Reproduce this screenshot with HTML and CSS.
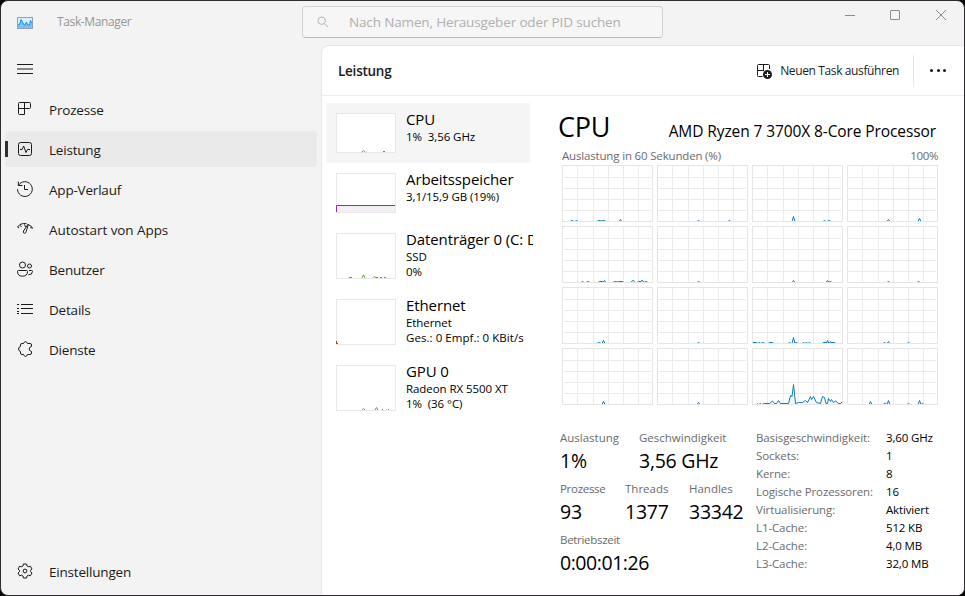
FILE: index.html
```html
<!DOCTYPE html>
<html lang="de">
<head>
    <meta charset="UTF-8">
    <meta name="viewport" content="width=device-width, initial-scale=1.0">
    <title>Task-Manager</title>
    <link rel="stylesheet" href="styles.css">
</head>
<body>
    <div class="window">
        <header class="titlebar">
            <div class="app">
                <svg class="app-icon" width="16" height="12" viewBox="0 0 16 12">
                    <rect x="0.5" y="0.5" width="15" height="11" fill="#d9effc" stroke="#8fa3b3"/>
                    <path d="M1 11V8L2.5 7.5L4 2.5L6 6L7.5 8.5L9.5 5L10.5 8L12.5 8L13.5 3.5L15 6V11Z" fill="#72c4fb"/>
                    <path d="M1 8L2.5 7.5L4 2.5L6 6L7.5 8.5L9.5 5L10.5 8L12.5 8L13.5 3.5L15 6" fill="none" stroke="#1c8de0"/>
                </svg>
                <span class="app-name">Task-Manager</span>
            </div>
            <div class="search">
                <svg width="12" height="12" viewBox="0 0 12 12" fill="none" stroke="#b4b4b4">
                    <circle cx="4.7" cy="4.7" r="3.7"/>
                    <path d="M7.5 7.5L11 11"/>
                </svg>
                <span class="search-text">Nach Namen, Herausgeber oder PID suchen</span>
            </div>
            <div class="controls">
                <svg width="12" height="12" viewBox="0 0 12 12"><path d="M0 6.5H10"/></svg>
                <svg width="12" height="12" viewBox="0 0 12 12"><rect x="0.5" y="1.5" width="9" height="9" rx="0.5"/></svg>
                <svg width="12" height="12" viewBox="0 0 12 12"><path d="M1 1L11 11M11 1L1 11"/></svg>
            </div>
        </header>

        <div class="body">
            <nav class="sidebar">
                <div class="burger">
                    <svg width="16" height="11" viewBox="0 0 16 11"><path d="M0 0.5H16M0 5H16M0 9.5H16"/></svg>
                </div>
                <ul class="menu">
                    <li>
                        <svg width="16" height="16" viewBox="0 0 16 16"><path d="M2.5 1.5H12.5Q13.5 1.5 13.5 2.5V6.5Q13.5 7.5 12.5 7.5H1.5M7.5 1.5V13.5H2.5Q1.5 13.5 1.5 12.5V2.5Q1.5 1.5 2.5 1.5"/></svg>
                        <span>Prozesse</span>
                    </li>
                    <li class="active">
                        <svg width="16" height="16" viewBox="0 0 16 16"><rect x="1.5" y="1.5" width="13" height="13" rx="2"/><path d="M3 8.5H5L6.7 5L9 11.5L10.5 8.5H13"/></svg>
                        <span>Leistung</span>
                    </li>
                    <li>
                        <svg width="16" height="16" viewBox="0 0 16 16"><path d="M1.3 0.5V4.5H5.5M1.6 4.2A7.4 7.4 0 1 1 0.5 8.2M7.5 4V8.5H11"/></svg>
                        <span>App-Verlauf</span>
                    </li>
                    <li>
                        <svg width="16" height="16" viewBox="0 0 16 16"><path d="M0.5 6Q2.5 2.6 6.5 2.5L9.5 2.7M3 4.2L4.5 6M0.5 6L2.2 7M12 4Q14.5 4.8 15.6 7.2L13.3 6.6M11.3 3L6.5 10Q6 12.3 7.5 12.3Q9 12.3 9.2 10.5L11.5 3M7.5 3.5L8.5 6"/></svg>
                        <span class="autostart">Autostart von Apps</span>
                    </li>
                    <li>
                        <svg width="16" height="16" viewBox="0 0 16 16"><circle cx="5.5" cy="4" r="3"/><circle cx="12.5" cy="5" r="2"/><path d="M1.5 9.5H9.5Q10.5 9.5 10.5 10.5Q10.5 15.2 5.5 15.2Q0.5 15.2 0.5 10.5Q0.5 9.5 1.5 9.5M12 9.5H14.5Q15.5 9.5 15.5 10.5Q15.2 14 11.5 13.8"/></svg>
                        <span>Benutzer</span>
                    </li>
                    <li>
                        <svg width="16" height="16" viewBox="0 0 16 16"><path d="M4 3.5H16M4 7.5H16M4 12.5H16M0 3.5H2M0 7.5H2M0 12.5H2M0 10.5H2"/></svg>
                        <span>Details</span>
                    </li>
                    <li>
                        <svg width="16" height="16" viewBox="0 0 16 16"><path d="M4.5 2.5H6.5Q7 0.7 8.5 0.7Q10 0.7 10.5 2.5H13Q14.5 2.5 14.5 4V5.5Q12.2 6 12.2 8Q12.2 10 14.5 10.5V12Q14.5 13.5 13 13.5H10.5Q10 15.3 8.5 15.3Q7 15.3 6.5 13.5H5Q3.5 13.5 3.5 12V10.5Q1.5 10 1.5 8Q1.5 6 3.5 5.5V4Q3.5 2.5 5 2.5"/></svg>
                        <span>Dienste</span>
                    </li>
                </ul>
                <div class="settings">
                    <svg width="16" height="16" viewBox="0 0 16 16"><circle cx="8" cy="8" r="1.9"/><path d="M6.4 1H9.6L10 3L11.5 3.8L13.4 3.2L15 6L13.5 7.3V8.7L15 10L13.4 12.8L11.5 12.2L10 13L9.6 15H6.4L6 13L4.5 12.2L2.6 12.8L1 10L2.5 8.7V7.3L1 6L2.6 3.2L4.5 3.8L6 3Z"/></svg>
                    <span>Einstellungen</span>
                </div>
            </nav>

            <main class="page">
                <div class="toolbar">
                    <h1>Leistung</h1>
                    <div class="new-task">
                        <svg width="16" height="16" viewBox="0 0 16 16">
                            <path d="M6.5 13.5H2.5Q1.5 13.5 1.5 12.5V2.5Q1.5 1.5 2.5 1.5H12.5Q13.5 1.5 13.5 2.5V6M1.5 7.5H8M7.5 1.5V8" fill="none" stroke="#1b1b1b"/>
                            <circle cx="11.5" cy="11.5" r="4.5" fill="#1b1b1b"/>
                            <path d="M11.5 9V14M9 11.5H14" stroke="#fff"/>
                        </svg>
                        <span>Neuen Task ausführen</span>
                    </div>
                    <div class="more"><i></i><i></i><i></i></div>
                </div>

                <div class="content">
                    <div class="devices">
                        <div class="device selected">
                            <svg class="thumb" width="60" height="40" viewBox="1 1 58 38"><path class="blue" d="M25.5 39L27.5 37.5L29.5 39M47 38.5H49"/></svg>
                            <div class="info">
                                <h2>CPU</h2>
                                <p>1%&nbsp; 3,56 GHz</p>
                            </div>
                        </div>
                        <div class="device">
                            <svg class="thumb" width="60" height="40" viewBox="1 1 58 38"><rect x="1" y="33" width="58" height="6" fill="#f3eff5"/><path class="purple" d="M0.5 39V32.5H59"/></svg>
                            <div class="info">
                                <h2>Arbeitsspeicher</h2>
                                <p>3,1/15,9 GB (19%)</p>
                            </div>
                        </div>
                        <div class="device">
                            <svg class="thumb" width="60" height="46" viewBox="1 1 58 44"><path class="green" d="M13 44.5H16M26 45L27.5 42L29 45M37 44.5L38 43.5L40 44.5H42M44 44.5H46M48 44.5H50"/></svg>
                            <div class="info">
                                <h2>Datenträger 0 (C: D:)</h2>
                                <p>SSD</p>
                                <p>0%</p>
                            </div>
                        </div>
                        <div class="device">
                            <svg class="thumb" width="60" height="46" viewBox="1 1 58 44"><path class="brown" d="M0.5 42V45M1 44.5H2"/></svg>
                            <div class="info">
                                <h2>Ethernet</h2>
                                <p>Ethernet</p>
                                <p class="net">Ges.: 0 Empf.: 0 KBit/s</p>
                            </div>
                        </div>
                        <div class="device">
                            <svg class="thumb" width="60" height="46" viewBox="1 1 58 44"><path class="blue" d="M26 45L27.5 43.5L29 45M39 45L40.5 42.5L42 45M46 44.5H47M52 44.5H53"/></svg>
                            <div class="info">
                                <h2>GPU 0</h2>
                                <p>Radeon RX 5500 XT</p>
                                <p>1%&nbsp; (36 °C)</p>
                            </div>
                        </div>
                    </div>

                    <div class="detail">
                        <div class="detail-head">
                            <span class="kind">CPU</span>
                            <span class="model">AMD Ryzen 7 3700X 8-Core Processor</span>
                        </div>
                        <div class="axis">
                            <span>Auslastung in 60 Sekunden (%)</span>
                            <span class="max">100%</span>
                        </div>
                        <div class="cores" id="cores"></div>

                        <div class="numbers">
                            <div class="live">
                                <div class="row">
                                    <div class="stat wide"><label>Auslastung</label><b>1%</b></div>
                                    <div class="stat"><label>Geschwindigkeit</label><b>3,56 GHz</b></div>
                                </div>
                                <div class="row">
                                    <div class="stat first"><label>Prozesse</label><b>93</b></div>
                                    <div class="stat second"><label>Threads</label><b>1377</b></div>
                                    <div class="stat"><label>Handles</label><b>33342</b></div>
                                </div>
                                <div class="row">
                                    <div class="stat uptime"><label>Betriebszeit</label><b>0:00:01:26</b></div>
                                </div>
                            </div>
                            <dl class="specs">
                                <dt>Basisgeschwindigkeit:</dt><dd>3,60 GHz</dd>
                                <dt>Sockets:</dt><dd>1</dd>
                                <dt>Kerne:</dt><dd>8</dd>
                                <dt>Logische Prozessoren:</dt><dd>16</dd>
                                <dt>Virtualisierung:</dt><dd>Aktiviert</dd>
                                <dt>L1-Cache:</dt><dd>512 KB</dd>
                                <dt>L2-Cache:</dt><dd>4,0 MB</dd>
                                <dt>L3-Cache:</dt><dd>32,0 MB</dd>
                            </dl>
                        </div>
                    </div>
                </div>
            </main>
        </div>
    </div>

    <script>
        // one entry per logical core: spikes as [start, end, height],
        // or a full curve as [x, height] pairs
        const cores = [
            [[9, 10, 1], [14, 14, 1], [36, 38, 1], [40, 42, 1], [58, 58, 2]],
            [[41, 41, 1], [72, 72, 1]],
            [[41, 41, 5], [72, 72, 1], [76, 77, 1]],
            [[41, 41, 2], [72, 72, 3]],
            [[20, 20, 1], [25, 26, 1], [37, 40, 1], [42, 42, 2], [52, 54, 1], [56, 60, 1], [70, 71, 2], [76, 78, 1], [79, 80, 2], [83, 84, 1]],
            [[41, 41, 1]],
            [[41, 41, 2], [75, 75, 2], [77, 78, 1]],
            [[41, 41, 1], [71, 71, 1]],
            [[36, 37, 1], [41, 41, 3]],
            [[41, 41, 1]],
            [[0, 4, 1], [7, 7, 1], [10, 11, 1], [17, 20, 1], [37, 37, 1], [41, 41, 6], [43, 44, 1], [51, 51, 1], [54, 54, 1], [57, 57, 1], [71, 74, 1], [75, 75, 3], [78, 78, 2], [79, 82, 1]],
            [[37, 37, 1], [41, 41, 2], [61, 61, 1]],
            [[41, 41, 3]],
            [[41, 41, 2]],
            [[4, 0], [5, 1], [6, 0], [8, 1], [9, 0], [12, 1], [17, 1], [20, 3.5], [22, 1], [24, 1], [26, 4], [28, 1], [36, 1], [38, 9], [39.5, 8], [41, 20], [43, 1], [46, 2], [50, 2], [53, 4], [55, 2], [58, 8], [59, 5], [61, 8], [64, 2], [68, 1], [70, 8], [72, 7], [73.5, 1], [75, 1], [76, 6], [78, 3], [79, 5], [81, 2], [83, 3.5], [86, 1], [88, 1], [90, 3]],
            [[23, 23, 3], [37, 38, 1], [41, 41, 4], [61, 61, 1], [72, 72, 4], [75, 75, 1]]
        ];

        const GRID = 'M15.5 1V56M31.5 1V56M46.5 1V56M61.5 1V56M76.5 1V56M1 12.5H89M1 23.5H89M1 34.5H89M1 45.5H89';

        function usagePath(points) {
            let d = 'M0 56.5';
            points.forEach(p => {
                if (p.length === 2) {
                    d += `L${p[0] + 0.5} ${56.5 - p[1]}`;
                    return;
                }
                const [from, to, h] = p;
                d += `L${from - 1} 56.5L${from + 0.5} ${56.5 - h}L${to + 0.5} ${56.5 - h}L${to + 2} 56.5`;
            });
            return d + 'L91 56.5';
        }

        document.getElementById('cores').innerHTML = cores.map(points => `
            <svg width="91" height="57">
                <path class="grid" d="${GRID}"/>
                <path class="usage" d="${usagePath(points)}"/>
                <rect class="frame" x="0.5" y="0.5" width="90" height="56"/>
            </svg>`).join('');
    </script>
</body>
</html>
```
FILE: styles.css
```css
* {
    box-sizing: border-box;
}
body {
    margin: 0;
    background: #000;
    font-family: "Open Sans", "Noto Sans", sans-serif;
    color: #1b1b1b;
}
h1, h2, p, ul, dl, dd {
    margin: 0;
    padding: 0;
    font-weight: normal;
}
svg {
    display: block;
    flex: none;
}
span, h1, h2, p, label, b, dt, dd {
    white-space: nowrap;
}
.window {
    display: flex;
    flex-direction: column;
    width: 965px;
    height: 596px;
    border: 1px solid #2e2c2e;
    border-radius: 8px;
    background: #f3f3f3;
    overflow: hidden;
}

/* title bar */
.titlebar {
    display: flex;
    height: 44px;
}
.app {
    display: flex;
    width: 301px;
    padding: 11px 0 0 16px;
}
.app-icon {
    margin-top: 5px;
}
.app-name {
    margin-left: 24px;
    font-size: 12px;
    line-height: 20px;
    letter-spacing: -0.37px;
    color: #969696;
}
.search {
    display: flex;
    align-items: center;
    width: 361px;
    height: 32px;
    margin-top: 5px;
    padding-left: 14px;
    border: 1px solid #d2d2d2;
    border-bottom-color: #bcbcbc;
    border-radius: 4px;
    background: #f6f6f6;
}
.search-text {
    margin-left: 20px;
    font-size: 13.5px;
    letter-spacing: -0.15px;
    color: #b0b0b0;
}
.controls {
    display: flex;
    gap: 33px;
    margin-left: auto;
    padding: 8px 17px 0 0;
}
.controls svg {
    fill: none;
    stroke: #8c8c8c;
}

/* navigation */
.body {
    display: flex;
    flex: 1;
    min-height: 0;
}
.sidebar {
    display: flex;
    flex-direction: column;
    width: 320px;
    padding: 19px 4px 6px;
    font-size: 13.5px;
    letter-spacing: -0.2px;
}
.sidebar svg {
    fill: none;
    stroke: #1b1b1b;
}
.burger {
    height: 27px;
    padding-left: 12px;
}
.menu {
    display: flex;
    flex-direction: column;
    gap: 4px;
    list-style: none;
}
.menu li,
.settings {
    display: flex;
    align-items: center;
    gap: 16px;
    height: 36px;
    padding-left: 12px;
    border-radius: 4px;
}
.menu li span,
.settings span {
    padding-top: 2px;
}
.menu .autostart {
    letter-spacing: -0.07px;
}
.menu .active {
    background: linear-gradient(#303030, #303030) 0 50% / 3px 16px no-repeat #eaeaea;
}
.settings {
    margin-top: auto;
}

/* main panel */
.page {
    flex: 1;
    border: 1px solid #e7e7e7;
    border-width: 1px 0 0 1px;
    border-radius: 8px 0 0 0;
    background: #fff;
}
.toolbar {
    display: flex;
    align-items: center;
    height: 50px;
    padding-left: 16px;
    border-bottom: 1px solid #ececec;
}
.toolbar h1 {
    padding-top: 1px;
    font-size: 13.5px;
    font-weight: 600;
    letter-spacing: -0.25px;
}
.new-task {
    display: flex;
    align-items: center;
    gap: 8px;
    height: 32px;
    margin-left: auto;
    padding-right: 14px;
    border-right: 1px solid #e7e7e7;
    font-size: 12px;
    letter-spacing: -0.37px;
}
.more {
    display: flex;
    gap: 3.5px;
    padding: 0 18px 0 16px;
}
.more i {
    width: 3px;
    height: 3px;
    border-radius: 50%;
    background: #1b1b1b;
}
.content {
    display: flex;
    color: #000;
}

/* device list */
.devices {
    width: 204px;
    margin: 7px 0 0 4px;
}
.device {
    display: flex;
    gap: 10px;
    padding: 10px 0 10px 10px;
}
.selected {
    background: #f5f5f5;
}
.thumb {
    border: 1px solid #e8e8e8;
    background: #fff;
    fill: none;
    overflow: visible;
}
.blue {
    stroke: #3c97cc;
}
.purple {
    stroke: #9528b4;
}
.green {
    stroke: #5aa82c;
}
.brown {
    stroke: #a74f01;
}
.info {
    width: 127px;
    height: 0;
    flex: none;
}
.info h2 {
    width: 127px;
    margin-top: -4px;
    overflow: hidden;
    font-size: 15px;
    line-height: 20px;
    letter-spacing: -0.1px;
}
.info p {
    font-size: 11.5px;
    line-height: 15px;
    letter-spacing: -0.07px;
}
.info .net {
    letter-spacing: 0.05px;
}

/* cpu page */
.detail {
    width: 380px;
    margin: 14px 0 0 28px;
}
.detail-head {
    display: flex;
    align-items: baseline;
    justify-content: space-between;
    height: 38px;
    padding-right: 2px;
}
.kind {
    font-size: 27px;
    line-height: 34px;
    letter-spacing: -0.3px;
}
.model {
    font-size: 15.5px;
    letter-spacing: -0.1px;
}
.axis {
    display: flex;
    justify-content: space-between;
    height: 17px;
    padding-left: 4px;
    font-size: 11.5px;
    line-height: 15px;
    letter-spacing: -0.17px;
    color: #6b6b6b;
}
.axis .max {
    letter-spacing: -0.4px;
}
.cores {
    display: grid;
    grid-template-columns: repeat(4, 91px);
    gap: 4px;
    padding-left: 4px;
}
.cores svg {
    fill: none;
}
.grid {
    stroke: #ebebeb;
}
.usage {
    stroke: #117dbb;
    fill: #f1f6fa;
}
.frame {
    stroke: #e6e6e6;
}
.numbers {
    display: flex;
    margin: 25px 0 0 2px;
}
.live {
    width: 196px;
}
.row {
    display: flex;
    height: 51px;
}
.stat label {
    display: block;
    font-size: 11.5px;
    line-height: 16px;
    color: #6b6b6b;
}
.stat b {
    display: block;
    font-size: 19.5px;
    font-weight: normal;
    line-height: 30px;
    letter-spacing: -0.25px;
}
.stat.uptime b {
    letter-spacing: -0.45px;
}
.stat.first label,
.stat.uptime label {
    letter-spacing: -0.3px;
}
.wide {
    width: 79px;
}
.first {
    width: 65px;
}
.second {
    width: 64px;
}
.specs {
    display: grid;
    grid-template-columns: 130px auto;
    grid-auto-rows: 18px;
    font-size: 11.5px;
    line-height: 16px;
    letter-spacing: -0.15px;
}
.specs dt {
    letter-spacing: -0.1px;
    color: #6b6b6b;
}
```
